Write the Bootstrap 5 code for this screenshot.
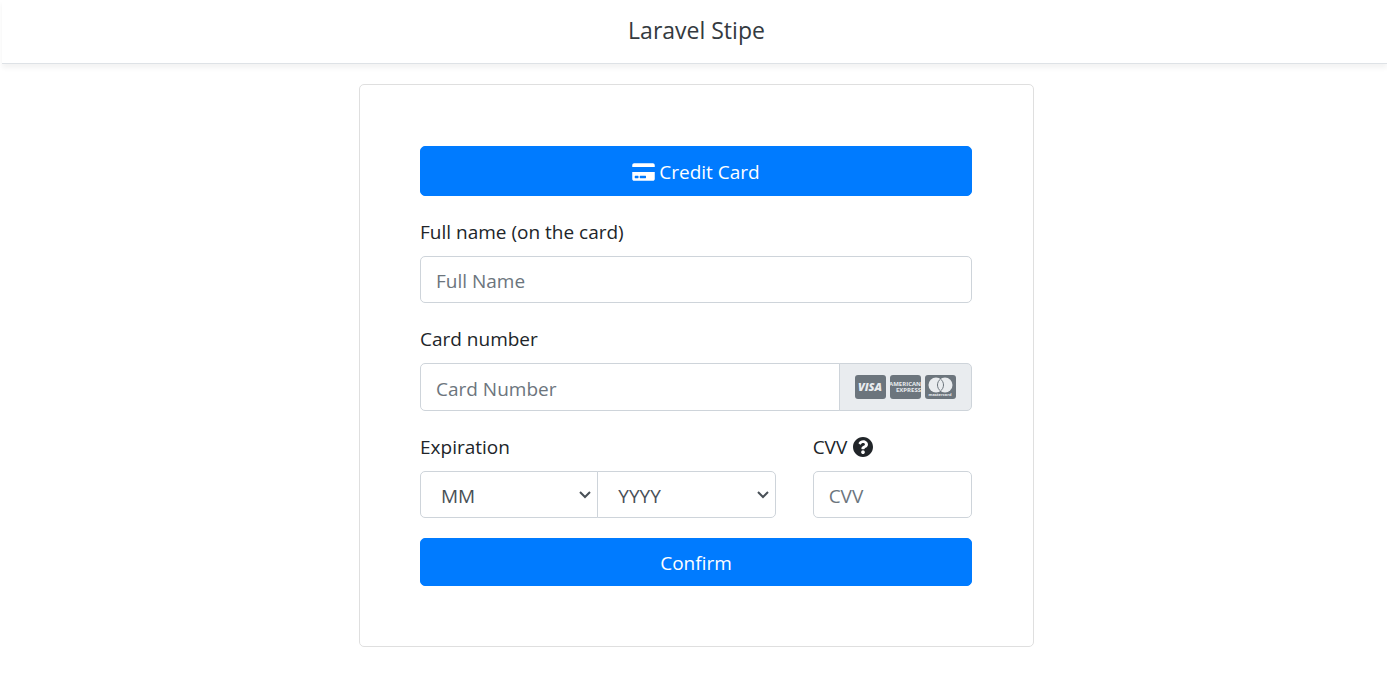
<!DOCTYPE html>
<html lang="en">
<head>
<meta charset="utf-8">
<meta name="viewport" content="width=device-width, initial-scale=1">
<title>Laravel Stipe</title>
<link href="https://cdn.jsdelivr.net/npm/bootstrap@5.3.0/dist/css/bootstrap.min.css" rel="stylesheet">
<style>
  body { font-family: "Open Sans", "Noto Sans", sans-serif; font-size: 19px; line-height: 30px; color: #212529; padding-left: 2px; }
  .topbar { height: 64px; padding-bottom: 4px; border-bottom: 1px solid #dee2e6; box-shadow: 0 4px 5px rgba(0, 0, 0, .05); }
  .topbar h1 { font-size: 23px; line-height: 30px; color: #343a40; }
  .pay-card { max-width: 675px; border-color: #dfdfdf; border-radius: 5px; }
  .pay-body { padding: 61px 61px 60px 60px; }
  .btn-pay { --bs-btn-bg: #007bff; --bs-btn-border-color: #007bff; --bs-btn-color: #fff; --bs-btn-hover-bg: #0069d9; --bs-btn-hover-color: #fff; --bs-btn-active-bg: #0062cc; --bs-btn-active-color: #fff; --bs-btn-border-radius: 5px; font-size: 19px; line-height: 30px; height: 48px; padding: 9px 15px 7px; }
  .btn-method { height: 50px; }
  .form-label { display: block; line-height: 32px; margin-bottom: 8px; }
  .form-control, .form-select { font-size: 19px; line-height: 28px; height: 47px; padding: 10px 15px 7px; border-color: #ced4da; border-radius: 5px; color: #495057; }
  .form-control::placeholder { color: #6c757d; opacity: 1; }
  .form-select { padding: 10px 20px 7px; background-size: 12px 12px; background-position: right 6px center; background-image: url("data:image/svg+xml,%3Csvg xmlns='http://www.w3.org/2000/svg' viewBox='0 0 12 12'%3E%3Cpath fill='none' stroke='%23495057' stroke-width='2' d='M1 3l5 5 5-5'/%3E%3C/svg%3E"); }
  .number-group .form-control { height: 48px; }
  .brands { background: #e9ecef; border-color: #ced4da; border-radius: 5px; padding: 0 15px; color: #6c757d; gap: 4px; }
  .brands text { font-family: "Open Sans", sans-serif; fill: #e9ecef; }
  .expiry-row { --bs-gutter-x: 37px; }
  .cvv-label { gap: 6px; }
  .field { margin-bottom: 20px; }
</style>
</head>
<body>
<header class="topbar d-flex align-items-center justify-content-center ps-1 bg-white">
  <h1 class="m-0 fw-normal">Laravel Stipe</h1>
</header>
<main class="container-fluid ps-1 pe-0 pt-1">
  <div class="card pay-card mx-auto mt-3">
    <div class="card-body pay-body">
      <button type="button" class="btn btn-pay btn-method w-100 d-flex align-items-center justify-content-center gap-1 field">
        <svg width="23" height="20" viewBox="0 0 576 512" fill="currentColor" aria-hidden="true"><path d="M0 432c0 26.500 21.500 48 48 48h480c26.500 0 48-21.500 48-48V256H0v176zm192-68c0-6.600 5.400-12 12-12h136c6.600 0 12 5.400 12 12v40c0 6.600-5.400 12-12 12H204c-6.600 0-12-5.400-12-12v-40zm-128 0c0-6.600 5.400-12 12-12h72c6.600 0 12 5.400 12 12v40c0 6.600-5.400 12-12 12H76c-6.600 0-12-5.400-12-12v-40zM576 80v48H0V80c0-26.500 21.500-48 48-48h480c26.500 0 48 21.500 48 48z"/></svg>
        <span>Credit Card</span>
      </button>
      <form>
        <div class="field">
          <label class="form-label" for="name">Full name (on the card)</label>
          <input type="text" class="form-control" id="name" placeholder="Full Name">
        </div>
        <div class="field">
          <label class="form-label" for="number">Card number</label>
          <div class="input-group number-group">
            <input type="text" class="form-control" id="number" placeholder="Card Number">
            <span class="input-group-text brands">
              <svg width="31" height="24" viewBox="0 0 31 24" role="img" aria-label="Visa"><rect width="31" height="24" rx="3" fill="currentColor"/><text x="15" y="16" text-anchor="middle" font-size="11" font-weight="800" font-style="italic">VISA</text></svg>
              <svg width="31" height="24" viewBox="0 0 31 24" role="img" aria-label="American Express"><rect width="31" height="24" rx="3" fill="currentColor"/><text x="15" y="11" text-anchor="middle" font-size="6" font-weight="700">AMERICAN</text><text x="31" y="17" text-anchor="end" font-size="6" font-weight="700">EXPRESS</text></svg>
              <svg width="31" height="24" viewBox="0 0 31 24" role="img" aria-label="Mastercard"><rect width="31" height="24" rx="3" fill="currentColor"/><circle cx="11" cy="10" r="7.500" fill="#e9ecef"/><circle cx="20" cy="10" r="7.500" fill="#e9ecef"/><path d="M15.500 4a7.500 7.500 0 0 1 0 12a7.500 7.500 0 0 1 0-12z" fill="#e9ecef" stroke="currentColor"/><text x="15" y="21" text-anchor="middle" font-size="4" font-weight="700">mastercard</text></svg>
            </span>
          </div>
        </div>
        <div class="row expiry-row field">
          <div class="col-8">
            <label class="form-label" for="month">Expiration</label>
            <div class="input-group">
              <select class="form-select" id="month"><option>MM</option><option>01</option><option>02</option><option>03</option></select>
              <select class="form-select" id="year" aria-label="Year"><option>YYYY</option><option>2024</option><option>2025</option></select>
            </div>
          </div>
          <div class="col-4">
            <label class="form-label cvv-label d-flex align-items-center" for="cvv"><span>CVV</span>
              <svg width="20" height="20" viewBox="8 8 496 496" fill="currentColor" aria-hidden="true"><path d="M504 256c0 136.997-111.043 248-248 248S8 392.997 8 256C8 119.083 119.043 8 256 8s248 111.083 248 248zM262.655 90c-54.497 0-89.255 22.957-116.549 63.758-3.536 5.286-2.353 12.415 2.715 16.258l34.699 26.310c5.205 3.947 12.621 3.008 16.665-2.122 17.864-22.658 30.113-35.797 57.303-35.797 20.429 0 45.698 13.148 45.698 32.958 0 14.976-12.363 22.667-32.534 33.976C247.128 238.528 216 254.941 216 296v4c0 6.627 5.373 12 12 12h56c6.627 0 12-5.373 12-12v-1.333c0-28.462 83.186-29.647 83.186-106.667 0-58.002-60.165-102-116.531-102zM256 338c-25.365 0-46 20.635-46 46 0 25.364 20.635 46 46 46s46-20.636 46-46c0-25.364-20.635-46-46-46z"/></svg>
            </label>
            <input type="text" class="form-control" id="cvv" placeholder="CVV">
          </div>
        </div>
        <button type="submit" class="btn btn-pay w-100 d-block">Confirm</button>
      </form>
    </div>
  </div>
</main>
<script src="https://cdn.jsdelivr.net/npm/bootstrap@5.3.0/dist/js/bootstrap.bundle.min.js"></script>
</body>
</html>
